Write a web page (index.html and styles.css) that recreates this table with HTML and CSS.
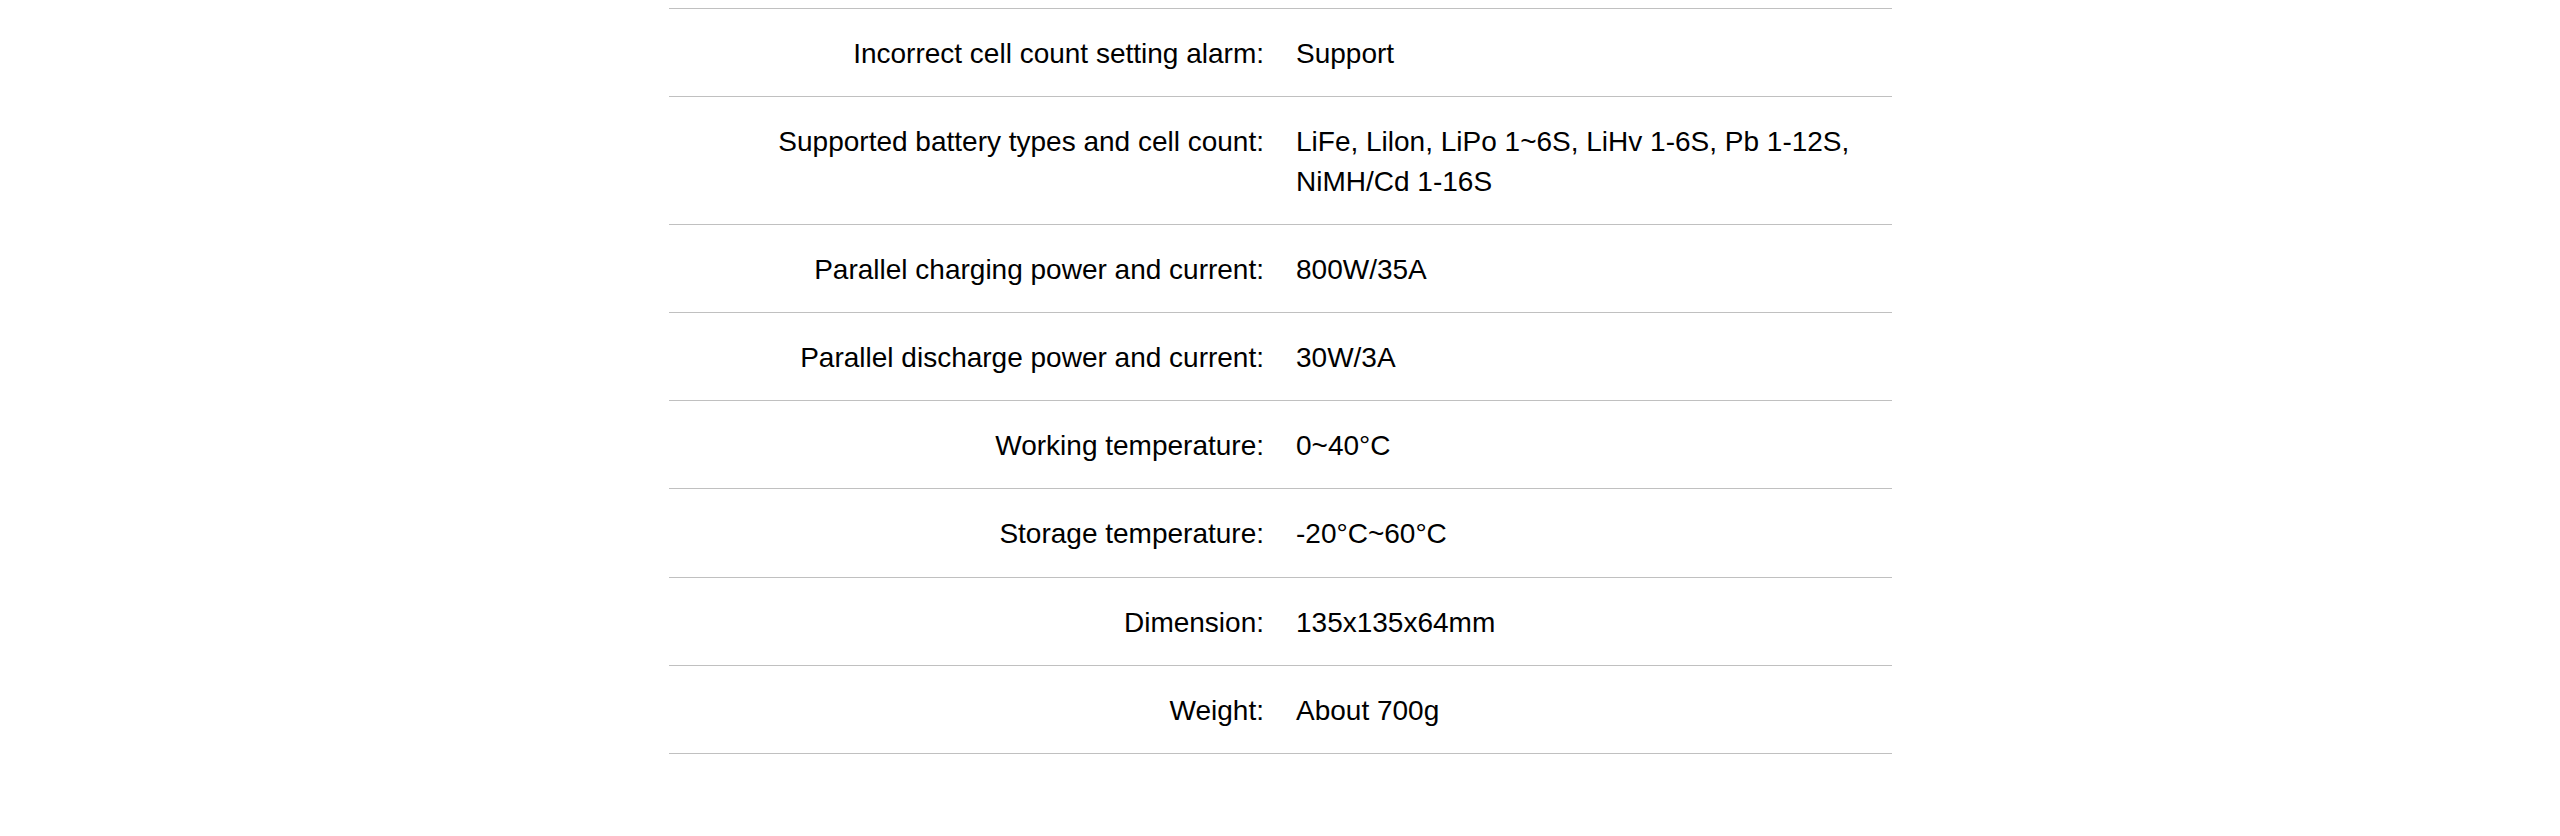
FILE: index.html
```html
<!DOCTYPE html>
<html lang="en">
<head>
<meta charset="utf-8">
<title>Specifications</title>
<link rel="stylesheet" href="styles.css">
</head>
<body>
<table class="spec-table">
  <tbody>
    <tr><td class="spec-label">Incorrect cell count setting alarm:</td><td class="spec-value">Support</td></tr>
    <tr><td class="spec-label">Supported battery types and cell count:</td><td class="spec-value">LiFe, Lilon, LiPo 1~6S, LiHv 1-6S, Pb 1-12S, NiMH/Cd 1-16S</td></tr>
    <tr><td class="spec-label">Parallel charging power and current:</td><td class="spec-value">800W/35A</td></tr>
    <tr><td class="spec-label">Parallel discharge power and current:</td><td class="spec-value">30W/3A</td></tr>
    <tr><td class="spec-label">Working temperature:</td><td class="spec-value">0~40°C</td></tr>
    <tr><td class="spec-label">Storage temperature:</td><td class="spec-value">-20°C~60°C</td></tr>
    <tr><td class="spec-label">Dimension:</td><td class="spec-value">135x135x64mm</td></tr>
    <tr><td class="spec-label">Weight:</td><td class="spec-value">About 700g</td></tr>
  </tbody>
</table>
</body>
</html>
```

FILE: styles.css
```css
html, body {
  margin: 0;
  padding: 0;
  background: #ffffff;
}

body {
  padding-top: 7.5px;
  font-family: "Liberation Sans", Arial, Helvetica, sans-serif;
  font-size: 28px;
  line-height: 40px;
  color: #000000;
}

.spec-table {
  width: 1223px;
  margin: 0 auto;
  border-collapse: collapse;
  table-layout: fixed;
  border-bottom: 1px solid #c0c0c0;
}

.spec-table tr {
  border-top: 1px solid #c0c0c0;
}

.spec-table td {
  width: 50%;
  padding: 25px 16px 22.2px 16px;
  vertical-align: top;
}

.spec-label {
  text-align: right;
}

.spec-value {
  text-align: left;
}
```
